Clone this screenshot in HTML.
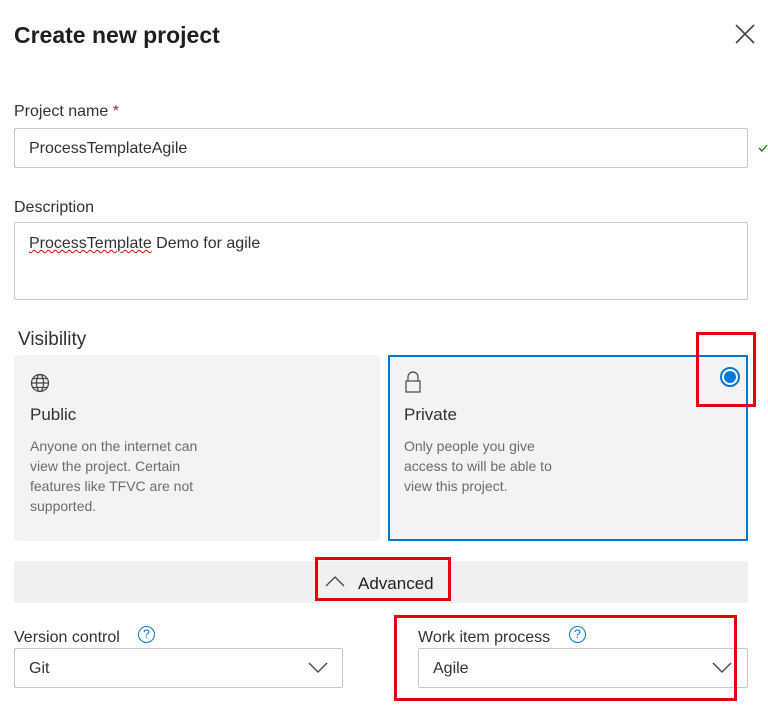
<!DOCTYPE html>
<html><head><style>
*{box-sizing:border-box;margin:0;padding:0}
body{width:768px;height:722px;background:#fff;font-family:"Liberation Sans",sans-serif;color:#323130;position:relative;overflow:hidden}
.a{position:absolute}
.lbl{font-size:16px;color:#323130}
.box{border:1px solid #c8c6c4;border-radius:2px;background:#fff}
.card{background:#f3f3f3;border-radius:3px}
.desc{font-size:14px;color:#6b6b6b;line-height:20px}
.red{border:3px solid #e8000b}
.q{width:17px;height:17px;border:1.5px solid #0078d4;border-radius:50%;color:#0078d4;font-size:12px;text-align:center;line-height:14px}
</style></head><body>
<div class="a" style="left:14px;top:22px;font-size:23px;font-weight:bold;color:#201f1e">Create new project</div>
<svg class="a" style="left:735px;top:24px" width="20" height="20"><path d="M1 1L19 19M19 1L1 19" stroke="#444" stroke-width="1.6"/></svg>
<div class="a lbl" style="left:14px;top:103px">Project name <span style="color:#a4262c">*</span></div>
<div class="a box" style="left:14px;top:128px;width:734px;height:40px"></div>
<div class="a" style="left:29px;top:140px;font-size:16px">ProcessTemplateAgile</div>
<svg class="a" style="left:758px;top:144px" width="10" height="8"><path d="M1 4L4 7L9 1" stroke="#107c10" stroke-width="1.3" fill="none"/></svg>
<div class="a lbl" style="left:14px;top:199px">Description</div>
<div class="a box" style="left:14px;top:222px;width:734px;height:78px"></div>
<div class="a" style="left:29px;top:235px;font-size:16px"><span style="text-decoration:underline wavy #e00;text-decoration-thickness:1px">ProcessTemplate</span> Demo for agile</div>
<div class="a" style="left:18px;top:329px;font-size:19px">Visibility</div>
<div class="a card" style="left:14px;top:355px;width:366px;height:186px"></div>
<svg class="a" style="left:30px;top:373px" width="20" height="20" fill="none" stroke="#444" stroke-width="1.2"><circle cx="10" cy="10" r="8.5"/><ellipse cx="10" cy="10" rx="3.5" ry="8.5"/><path d="M1.5 10H18.5M3 5.5H17M3 14.5H17"/></svg>
<div class="a" style="left:30px;top:405px;font-size:17px">Public</div>
<div class="a desc" style="left:30px;top:436px">Anyone on the internet can<br>view the project. Certain<br>features like TFVC are not<br>supported.</div>
<div class="a card" style="left:388px;top:355px;width:360px;height:186px;border:2px solid #0078d4;border-radius:0"></div>
<svg class="a" style="left:404px;top:371px" width="18" height="22" fill="none" stroke="#444" stroke-width="1.2"><path d="M4 10V6a5 5 0 0 1 10 0v4"/><rect x="2" y="10" width="14" height="11"/></svg>
<div class="a" style="left:404px;top:405px;font-size:17px">Private</div>
<div class="a desc" style="left:404px;top:436px">Only people you give<br>access to will be able to<br>view this project.</div>
<div class="a" style="left:720px;top:367px;width:20px;height:20px;border-radius:50%;border:2px solid #0078d4;background:#fff"><div style="margin:2px;width:12px;height:12px;border-radius:50%;background:#0078d4"></div></div>
<div class="a red" style="left:696px;top:332px;width:60px;height:75px"></div>
<div class="a" style="left:14px;top:561px;width:734px;height:42px;background:#f0f0f0;border-radius:2px"></div>
<svg class="a" style="left:325px;top:575px" width="20" height="12"><path d="M1 11L10 2L19 11" stroke="#444" stroke-width="1.3" fill="none"/></svg>
<div class="a" style="left:358px;top:574px;font-size:17px;color:#201f1e">Advanced</div>
<div class="a red" style="left:315px;top:557px;width:136px;height:44px"></div>
<div class="a lbl" style="left:14px;top:629px">Version control</div>
<div class="a q" style="left:138px;top:626px">?</div>
<div class="a box" style="left:14px;top:648px;width:329px;height:40px"></div>
<div class="a" style="left:29px;top:660px;font-size:16px">Git</div>
<svg class="a" style="left:308px;top:662px" width="20" height="12"><path d="M1 1L10 10L19 1" stroke="#444" stroke-width="1.4" fill="none"/></svg>
<div class="a lbl" style="left:418px;top:629px">Work item process</div>
<div class="a q" style="left:569px;top:626px">?</div>
<div class="a box" style="left:418px;top:648px;width:330px;height:40px"></div>
<div class="a" style="left:433px;top:660px;font-size:16px">Agile</div>
<svg class="a" style="left:712px;top:662px" width="20" height="12"><path d="M1 1L10 10L19 1" stroke="#444" stroke-width="1.4" fill="none"/></svg>
<div class="a red" style="left:394px;top:615px;width:343px;height:86px"></div>
</body></html>
